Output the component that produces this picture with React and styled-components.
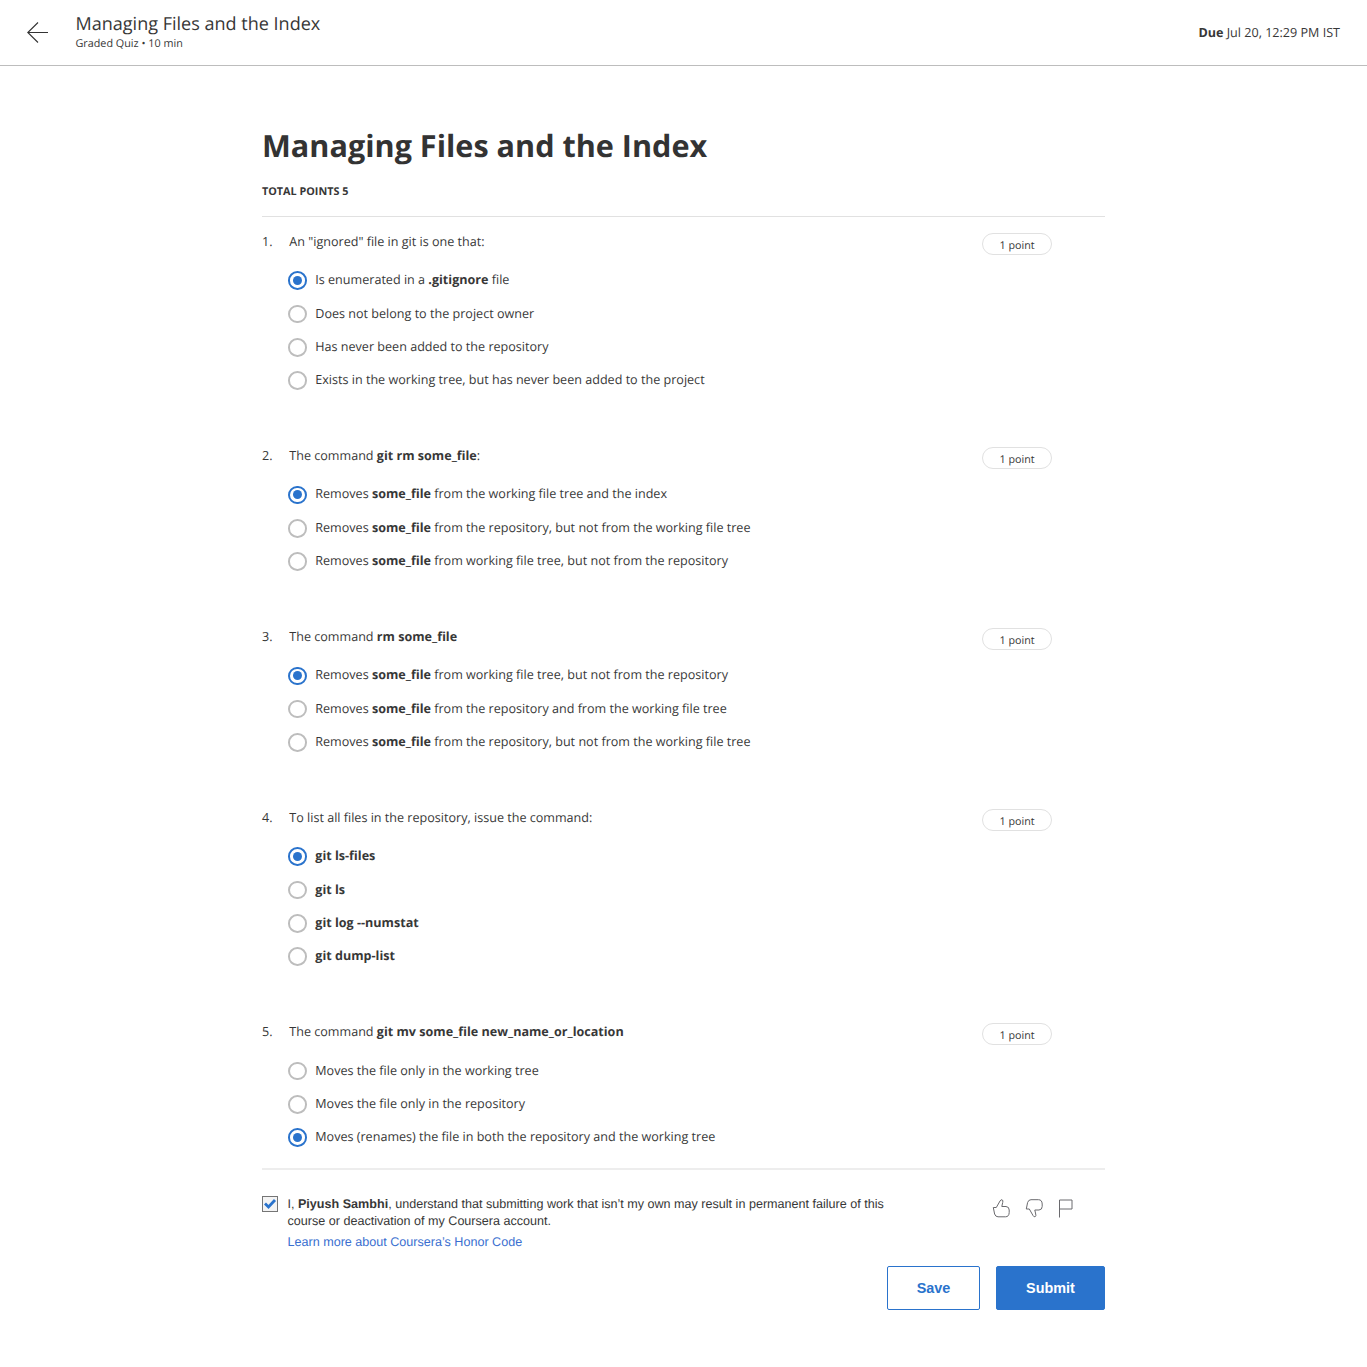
import React from "react";
import styled, { createGlobalStyle } from "styled-components";

const GlobalStyle = createGlobalStyle`
  * { box-sizing: border-box; }
  body {
    margin: 0;
    background: #fff;
    color: #373737;
    font-family: "Open Sans", "Noto Sans", sans-serif;
    font-size: 12.585px;
    text-rendering: geometricPrecision;
  }
`;

const Page = styled.div`
  min-height: 1367px;
`;

const TopBar = styled.header`
  display: flex;
  align-items: center;
  height: 66px;
  padding: 0 27px;
  border-bottom: 1px solid #bdbdbd;
`;

const BackIcon = styled.svg`
  width: 22px;
  height: 22px;
  margin-right: 26.5px;
  fill: none;
  stroke: #333;
  stroke-width: 1.1;
`;

const TitleGroup = styled.div`
  flex: 1;
`;

const BarTitle = styled.div`
  font-size: 18.05px;
  line-height: 23px;
`;

const BarMeta = styled.div`
  font-size: 10.8px;
  line-height: 16px;
`;

const Due = styled.div`
  line-height: 18px;
`;

const Main = styled.main`
  width: 843px;
  margin: 0 auto;
  padding-top: 54px;
`;

const Heading = styled.h1`
  margin: 0;
  font-size: 30.6px;
  line-height: 50px;
  font-weight: 700;
  color: #333;
`;

const Total = styled.div`
  height: 47px;
  padding-top: 14px;
  font-size: 10.8px;
  line-height: 16px;
  font-weight: 700;
  border-bottom: 1px solid #e1e1e1;
`;

const Questions = styled.div`
  padding: 16px 53px 13.6px 0;
  border-bottom: 2px solid #ededed;
`;

const Question = styled.section`
  margin-bottom: ${(p) => (p.$last ? 0 : 50)}px;
`;

const Prompt = styled.div`
  display: flex;
  align-items: flex-start;
  height: 31px;
  line-height: 17px;
`;

const Num = styled.span`
  width: 27.3px;
`;

const PromptText = styled.span`
  flex: 1;
`;

const Pill = styled.span`
  display: flex;
  align-items: center;
  justify-content: center;
  width: 70px;
  height: 22px;
  padding-top: 4px;
  border: 1px solid #e1e1e1;
  border-radius: 11px;
  font-size: 10.75px;
`;

const Option = styled.div`
  display: flex;
  align-items: center;
  height: 33.32px;
  padding-left: 26px;
  gap: 8.7px;
`;

const Radio = styled.span`
  display: flex;
  align-items: center;
  justify-content: center;
  width: 18.6px;
  height: 18.6px;
  border: 2px solid ${(p) => (p.$on ? "#2a73cc" : "#bdbdbd")};
  border-radius: 50%;

  &::after {
    content: "";
    width: 9px;
    height: 9px;
    border-radius: 50%;
    background: ${(p) => (p.$on ? "#2a73cc" : "transparent")};
  }
`;

const Label = styled.span`
  line-height: 17px;
  padding-bottom: 1.9px;
`;

const Footer = styled.div`
  display: flex;
  align-items: flex-start;
  height: 96.4px;
  padding: 26.4px 28.3px 0 0;
  font-family: "Liberation Sans", Arial, sans-serif;
`;

const Check = styled.span`
  width: 16px;
  height: 16px;
  margin-right: 9.5px;
  border: 1px solid #757575;
  background: #f4f4f4;

  svg { display: block; }
`;

const Honor = styled.div`
  flex: 1;
  line-height: 17px;
`;

const HonorLink = styled.a`
  display: block;
  margin-top: 4px;
  color: #3a6fd0;
`;

const Feedback = styled.div`
  display: flex;
  gap: 14px;
  margin-top: 1.6px;

  svg {
    width: 19px;
    height: 20px;
    fill: none;
    stroke: #6a6a6e;
    stroke-width: 1;
    stroke-linejoin: round;
  }
`;

const Actions = styled.div`
  display: flex;
  justify-content: flex-end;
  gap: 16px;
`;

const Button = styled.button`
  width: ${(p) => (p.$primary ? 109 : 93)}px;
  height: 44px;
  padding: 0;
  border: 1px solid #2a73cc;
  border-radius: 2px;
  background: ${(p) => (p.$primary ? "#2a73cc" : "#fff")};
  color: ${(p) => (p.$primary ? "#fff" : "#2a73cc")};
  font: 700 14.4px "Liberation Sans", Arial, sans-serif;
`;

const removes = (rest) => (
  <>
    Removes <b>some_file</b> {rest}
  </>
);

const questions = [
  {
    prompt: 'An "ignored" file in git is one that:',
    picked: 0,
    options: [
      <>Is enumerated in a <b>.gitignore</b> file</>,
      "Does not belong to the project owner",
      "Has never been added to the repository",
      "Exists in the working tree, but has never been added to the project",
    ],
  },
  {
    prompt: <>The command <b>git rm some_file</b>:</>,
    picked: 0,
    options: [
      removes("from the working file tree and the index"),
      removes("from the repository, but not from the working file tree"),
      removes("from working file tree, but not from the repository"),
    ],
  },
  {
    prompt: <>The command <b>rm some_file</b></>,
    picked: 0,
    options: [
      removes("from working file tree, but not from the repository"),
      removes("from the repository and from the working file tree"),
      removes("from the repository, but not from the working file tree"),
    ],
  },
  {
    prompt: "To list all files in the repository, issue the command:",
    picked: 0,
    options: [<b>git ls-files</b>, <b>git ls</b>, <b>git log --numstat</b>, <b>git dump-list</b>],
  },
  {
    prompt: <>The command <b>git mv some_file new_name_or_location</b></>,
    picked: 2,
    options: [
      "Moves the file only in the working tree",
      "Moves the file only in the repository",
      "Moves (renames) the file in both the repository and the working tree",
    ],
  },
];

const Thumb = () => (
  <path d="M1.300 9.500H4.300L8 3Q9 1 10.400 2Q11.200 2.600 10.700 4.500L9.800 8.500H14Q17.200 8.700 17.200 12V14.500Q17 18.800 13.500 18.800H6Q3.500 18.800 2.600 16Z" />
);

export default function App() {
  return (
    <Page>
      <GlobalStyle />
      <TopBar>
        <BackIcon viewBox="0 0 22 22">
          <path d="M21 10.500H1M11 .5L.8 10.500L11 20.500" />
        </BackIcon>
        <TitleGroup>
          <BarTitle>Managing Files and the Index</BarTitle>
          <BarMeta>Graded Quiz • 10 min</BarMeta>
        </TitleGroup>
        <Due><b>Due</b> Jul 20, 12:29 PM IST</Due>
      </TopBar>
      <Main>
        <Heading>Managing Files and the Index</Heading>
        <Total>TOTAL POINTS 5</Total>
        <Questions>
          {questions.map((q, i) => (
            <Question key={i} $last={i === questions.length - 1}>
              <Prompt>
                <Num>{i + 1}.</Num>
                <PromptText>{q.prompt}</PromptText>
                <Pill>1 point</Pill>
              </Prompt>
              {q.options.map((o, j) => (
                <Option key={j}>
                  <Radio $on={q.picked === j} />
                  <Label>{o}</Label>
                </Option>
              ))}
            </Question>
          ))}
        </Questions>
        <Footer>
          <Check>
            <svg width="14" height="14" viewBox="0 0 14 14">
              <path d="M2 6.500L5.500 10L12 3" fill="none" stroke="#2a73cc" strokeWidth="2.800" />
            </svg>
          </Check>
          <Honor>
            I, <b>Piyush Sambhi</b>, understand that submitting work that isn’t my own may result in permanent failure of this
            <br />
            course or deactivation of my Coursera account.
            <HonorLink>Learn more about Coursera’s Honor Code</HonorLink>
          </Honor>
          <Feedback>
            <svg viewBox="0 0 19 20"><Thumb /></svg>
            <svg viewBox="0 0 19 20"><g transform="translate(0 20.500) scale(1 -1)"><Thumb /></g></svg>
            <svg viewBox="0 0 19 20"><path d="M1.500 19.500V2H14V11H1.500" /></svg>
          </Feedback>
        </Footer>
        <Actions>
          <Button>Save</Button>
          <Button $primary>Submit</Button>
        </Actions>
      </Main>
    </Page>
  );
}
